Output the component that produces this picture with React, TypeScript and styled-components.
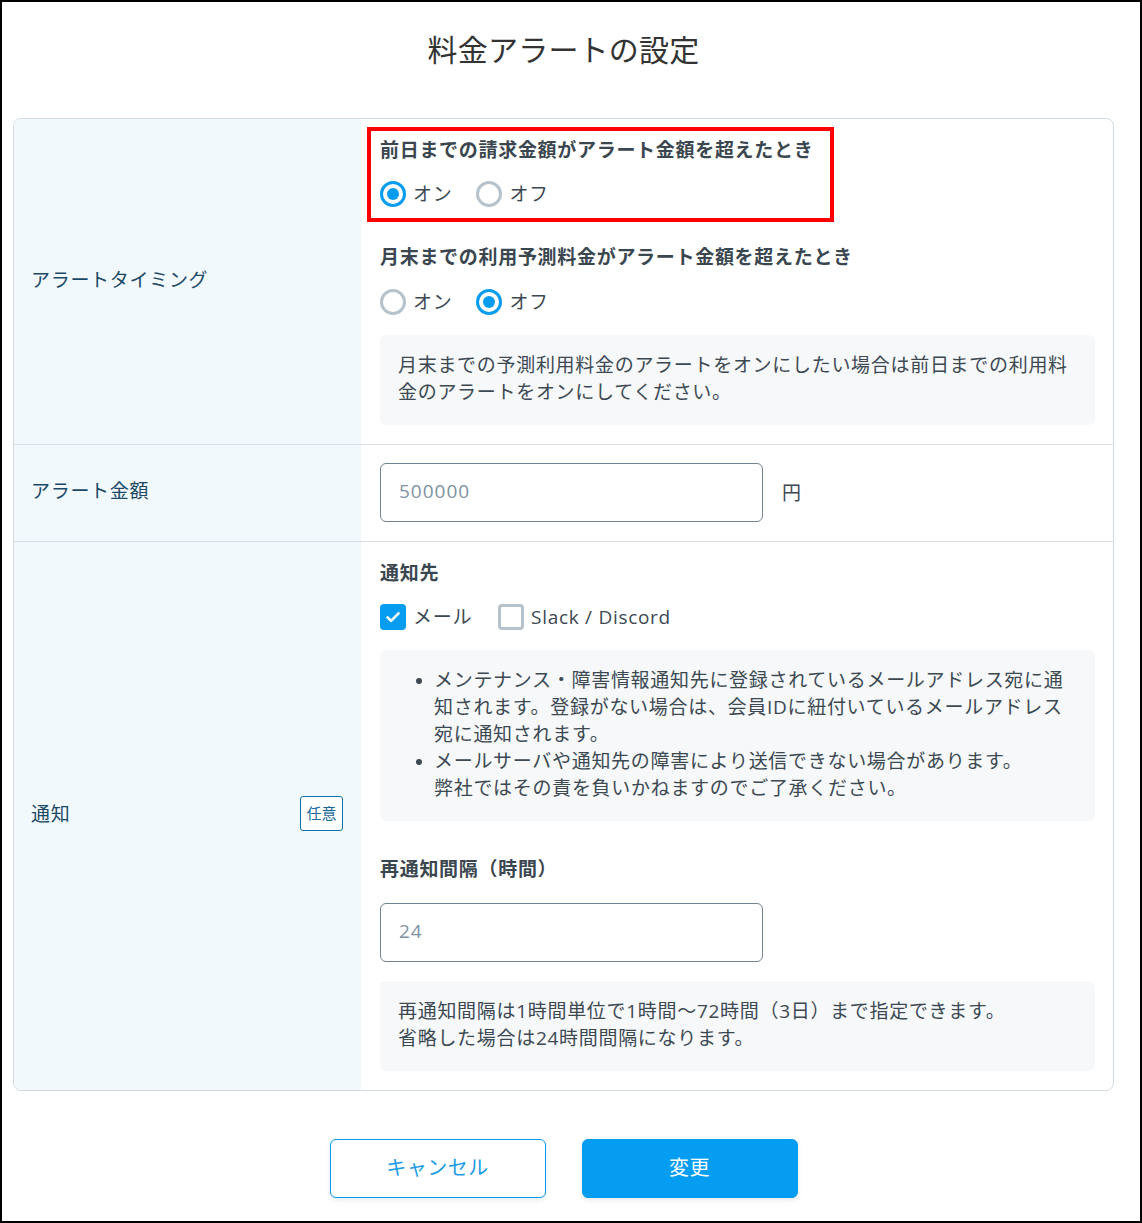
import React from 'react'
import styled, { createGlobalStyle } from 'styled-components'

const GlobalStyle = createGlobalStyle`
  body {
    margin: 0;
    font-family: 'Open Sans', 'Noto Sans CJK JP', sans-serif;
    color: #3c4852;
  }
  * {
    box-sizing: border-box;
  }
`

const Frame = styled.div`
  width: 1142px;
  height: 1223px;
  border: 2px solid #000;
  background: #fff;
  padding: 0 26px 0 11px;
  display: flex;
  flex-direction: column;
`

const Title = styled.h1`
  margin: 28px 0 48px;
  height: 40px;
  line-height: 40px;
  text-align: center;
  font-size: 30px;
  font-weight: 400;
  letter-spacing: 0.2px;
  color: #333;
`

const Card = styled.section`
  border: 1px solid #d3dce3;
  border-radius: 8px;
  overflow: hidden;
`

const Row = styled.div`
  display: grid;
  grid-template-columns: 347px 1fr;
  & + & {
    border-top: 1px solid #d8e0e6;
  }
`

const Label = styled.div`
  background: #f2f9fd;
  display: flex;
  align-items: center;
  justify-content: space-between;
  padding: 0 18px 6px 17px;
  font-size: 19px;
  letter-spacing: 0.7px;
  color: #1b4866;
`

const Badge = styled.span`
  width: 43px;
  height: 35px;
  border: 1px solid #1070a8;
  border-radius: 3px;
  display: flex;
  align-items: center;
  justify-content: center;
  padding-bottom: 2px;
  font-size: 15px;
  letter-spacing: 0;
  color: #1a6a9a;
  background: #fff;
`

const Cell = styled.div<{ $inline?: boolean }>`
  padding: ${({ $inline }) => ($inline ? '18px 18px 19px 19px' : '17px 18px 19px 19px')};
  display: ${({ $inline }) => ($inline ? 'flex' : 'block')};
  align-items: center;
  gap: 19px;
  font-size: 19px;
  letter-spacing: 0.7px;
`

const Heading = styled.div<{ $space?: number }>`
  margin-top: ${({ $space }) => $space ?? 0}px;
  height: 28px;
  line-height: 28px;
  font-weight: 700;
  color: #3b4750;
  white-space: nowrap;
`

const Highlight = styled.div`
  position: relative;
  width: fit-content;
  &::after {
    content: '';
    position: absolute;
    top: -9px;
    left: -13px;
    right: -21px;
    bottom: -14px;
    border: 4px solid #ff0000;
    pointer-events: none;
  }
`

const Options = styled.div<{ $space?: number; $gap?: number }>`
  display: flex;
  gap: ${({ $gap }) => $gap ?? 24}px;
  margin-top: ${({ $space }) => $space ?? 16}px;
  height: 28px;
  align-items: center;
`

const Option = styled.label`
  display: flex;
  align-items: center;
  gap: 7px;
  line-height: 28px;
  color: #3c4852;
  white-space: nowrap;
`

const Radio = styled.span<{ $checked?: boolean }>`
  width: 26px;
  height: 26px;
  border-radius: 50%;
  border: 3px solid ${({ $checked }) => ($checked ? '#069df0' : '#b6c3cc')};
  display: flex;
  align-items: center;
  justify-content: center;
  &::after {
    content: '';
    width: 12px;
    height: 12px;
    border-radius: 50%;
    background: ${({ $checked }) => ($checked ? '#069df0' : 'transparent')};
  }
`

const Box = styled.span<{ $checked?: boolean }>`
  width: 26px;
  height: 26px;
  border-radius: 4px;
  border: ${({ $checked }) => ($checked ? 'none' : '3px solid #b6c3cc')};
  background: ${({ $checked }) => ($checked ? '#069df0' : '#fff')};
  display: flex;
  align-items: center;
  justify-content: center;
`

const Note = styled.div<{ $space?: number }>`
  margin-top: ${({ $space }) => $space ?? 19}px;
  background: #f6f8fa;
  border-radius: 6px;
  padding: 17px 18px 19px 18px;
  line-height: 27px;
  color: #3c4852;
`

const Bullets = styled.ul`
  margin: 0;
  padding: 0 0 0 36px;
  list-style: none;
`

const Bullet = styled.li`
  position: relative;
  white-space: nowrap;
  &::before {
    content: '';
    position: absolute;
    left: -18px;
    top: 11px;
    width: 6px;
    height: 6px;
    border-radius: 50%;
    background: #3c4852;
  }
`

const TextInput = styled.input<{ $space?: number }>`
  display: block;
  margin-top: ${({ $space }) => $space ?? 0}px;
  width: 383px;
  height: 59px;
  border: 1px solid #6e8494;
  border-radius: 6px;
  padding: 0 18px 3px;
  font-family: 'Open Sans', 'Noto Sans CJK JP', sans-serif;
  font-size: 19px;
  letter-spacing: 1px;
  color: #3c4852;
  outline: none;
  &::placeholder {
    color: #7d93a3;
  }
`

const Unit = styled.span`
  color: #3c4852;
  padding-bottom: 2px;
`

const Footer = styled.div`
  display: flex;
  justify-content: center;
  gap: 36px;
  padding-top: 48px;
`

const Button = styled.button<{ $primary?: boolean }>`
  width: 216px;
  height: 59px;
  border-radius: 6px;
  border: 1px solid #069df0;
  padding: 0 0 4px;
  background: ${({ $primary }) => ($primary ? '#049df2' : '#fff')};
  color: ${({ $primary }) => ($primary ? '#fff' : '#1a9be6')};
  font-family: 'Open Sans', 'Noto Sans CJK JP', sans-serif;
  font-size: 20px;
  letter-spacing: 0.5px;
  box-shadow: 0 2px 5px rgba(40, 70, 100, 0.12);
  cursor: pointer;
`

const Check = () => (
  <svg width="16" height="16" viewBox="0 0 16 16">
    <path d="M2.5 8.3l3.6 3.6 7.4-7.6" fill="none" stroke="#fff" strokeWidth="2.6" strokeLinecap="round" strokeLinejoin="round" />
  </svg>
)

export default function App() {
  return (
    <>
      <GlobalStyle />
      <Frame>
        <Title>料金アラートの設定</Title>
        <Card>
          <Row>
            <Label>アラートタイミング</Label>
            <Cell>
              <Highlight>
                <Heading>前日までの請求金額がアラート金額を超えたとき</Heading>
                <Options>
                  <Option><Radio $checked />オン</Option>
                  <Option><Radio />オフ</Option>
                </Options>
              </Highlight>
              <Heading $space={35}>月末までの利用予測料金がアラート金額を超えたとき</Heading>
              <Options $space={17}>
                <Option><Radio />オン</Option>
                <Option><Radio $checked />オフ</Option>
              </Options>
              <Note>
                月末までの予測利用料金のアラートをオンにしたい場合は前日までの利用料
                <br />
                金のアラートをオンにしてください。
              </Note>
            </Cell>
          </Row>
          <Row>
            <Label>アラート金額</Label>
            <Cell $inline>
              <TextInput placeholder="500000" />
              <Unit>円</Unit>
            </Cell>
          </Row>
          <Row>
            <Label>
              通知
              <Badge>任意</Badge>
            </Label>
            <Cell>
              <Heading>通知先</Heading>
              <Options $gap={26}>
                <Option><Box $checked><Check /></Box>メール</Option>
                <Option><Box />Slack / Discord</Option>
              </Options>
              <Note>
                <Bullets>
                  <Bullet>
                    メンテナンス・障害情報通知先に登録されているメールアドレス宛に通
                    <br />
                    知されます。登録がない場合は、会員IDに紐付いているメールアドレス
                    <br />
                    宛に通知されます。
                  </Bullet>
                  <Bullet>
                    メールサーバや通知先の障害により送信できない場合があります。
                    <br />
                    弊社ではその責を負いかねますのでご了承ください。
                  </Bullet>
                </Bullets>
              </Note>
              <Heading $space={34}>再通知間隔（時間）</Heading>
              <TextInput $space={20} placeholder="24" />
              <Note>
                再通知間隔は1時間単位で1時間～72時間（3日）まで指定できます。
                <br />
                省略した場合は24時間間隔になります。
              </Note>
            </Cell>
          </Row>
        </Card>
        <Footer>
          <Button>キャンセル</Button>
          <Button $primary>変更</Button>
        </Footer>
      </Frame>
    </>
  )
}
